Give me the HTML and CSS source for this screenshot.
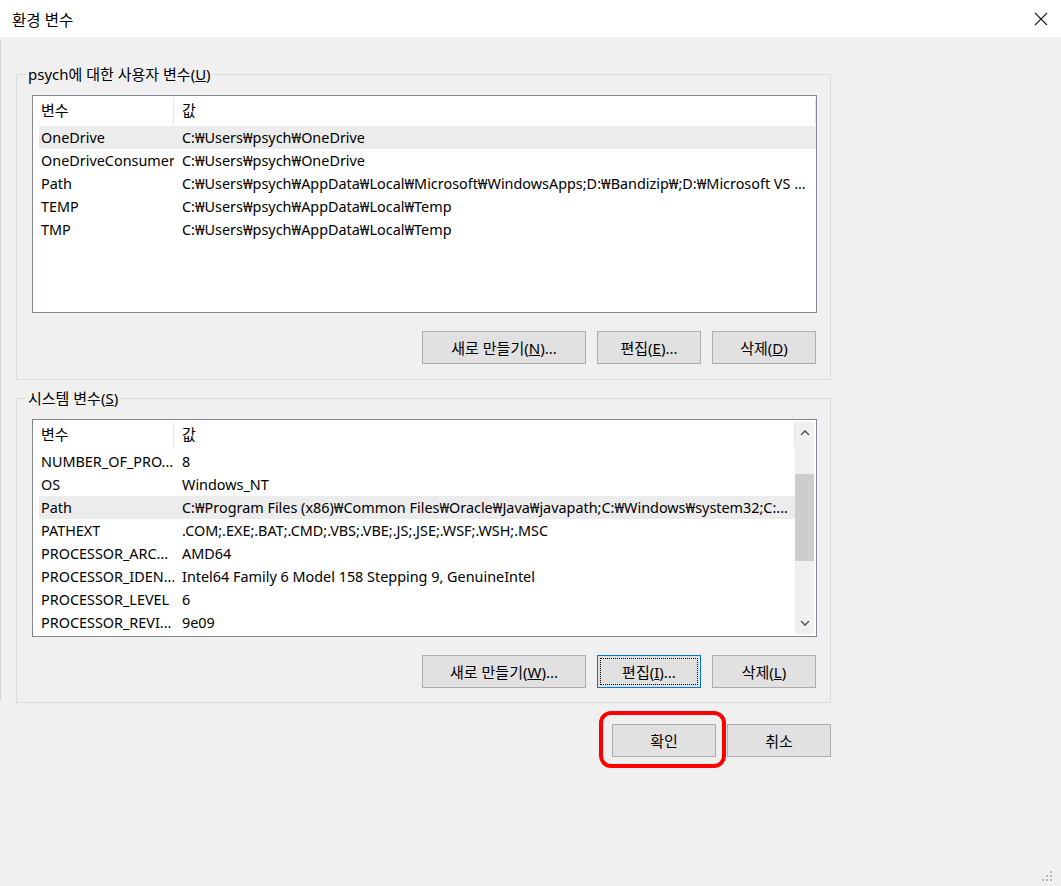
FILE: index.html
```html
<!DOCTYPE html>
<html lang="ko">
<head>
	<meta charset="UTF-8">
	<title>환경 변수</title>
	<link rel="stylesheet" href="styles.css">
</head>
<body>
	<div class="window">
		<div class="titlebar">
			<span class="title">환경 변수</span>
			<svg class="close" width="14" height="14" viewBox="0 0 14 14">
				<path d="M1 1 L13 13 M13 1 L1 13" stroke="#1e1e1e" stroke-width="1.1" fill="none"/>
			</svg>
		</div>
		<div class="content">
			<fieldset class="group">
				<legend>psych에 대한 사용자 변수(<u>U</u>)</legend>
				<div class="list">
					<div class="rows">
						<div class="row head"><span class="name">변수</span><span class="value">값</span></div>
						<div class="row sel"><span class="name">OneDrive</span><span class="value">C:₩Users₩psych₩OneDrive</span></div>
						<div class="row"><span class="name">OneDriveConsumer</span><span class="value">C:₩Users₩psych₩OneDrive</span></div>
						<div class="row"><span class="name">Path</span><span class="value">C:₩Users₩psych₩AppData₩Local₩Microsoft₩WindowsApps;D:₩Bandizip₩;D:₩Microsoft VS ...</span></div>
						<div class="row"><span class="name">TEMP</span><span class="value">C:₩Users₩psych₩AppData₩Local₩Temp</span></div>
						<div class="row"><span class="name">TMP</span><span class="value">C:₩Users₩psych₩AppData₩Local₩Temp</span></div>
					</div>
				</div>
				<div class="btnrow">
					<button class="btn wide">새로 만들기(<u>N</u>)...</button>
					<button class="btn">편집(<u>E</u>)...</button>
					<button class="btn">삭제(<u>D</u>)</button>
				</div>
			</fieldset>

			<fieldset class="group second">
				<legend>시스템 변수(<u>S</u>)</legend>
				<div class="list">
					<div class="rows">
						<div class="row head"><span class="name">변수</span><span class="value">값</span></div>
						<div class="row"><span class="name">NUMBER_OF_PRO...</span><span class="value">8</span></div>
						<div class="row"><span class="name">OS</span><span class="value">Windows_NT</span></div>
						<div class="row sel"><span class="name">Path</span><span class="value">C:₩Program Files (x86)₩Common Files₩Oracle₩Java₩javapath;C:₩Windows₩system32;C:...</span></div>
						<div class="row"><span class="name">PATHEXT</span><span class="value">.COM;.EXE;.BAT;.CMD;.VBS;.VBE;.JS;.JSE;.WSF;.WSH;.MSC</span></div>
						<div class="row"><span class="name">PROCESSOR_ARC...</span><span class="value">AMD64</span></div>
						<div class="row"><span class="name">PROCESSOR_IDEN...</span><span class="value">Intel64 Family 6 Model 158 Stepping 9, GenuineIntel</span></div>
						<div class="row"><span class="name">PROCESSOR_LEVEL</span><span class="value">6</span></div>
						<div class="row"><span class="name">PROCESSOR_REVI...</span><span class="value">9e09</span></div>
					</div>
					<div class="scrollbar">
						<svg class="arrow" width="10" height="8" viewBox="0 0 10 8"><path d="M1 6 L5 2 L9 6" stroke="#606060" stroke-width="1.6" fill="none"/></svg>
						<div class="track"><div class="thumb"></div></div>
						<svg class="arrow" width="10" height="8" viewBox="0 0 10 8"><path d="M1 2 L5 6 L9 2" stroke="#606060" stroke-width="1.6" fill="none"/></svg>
					</div>
				</div>
				<div class="btnrow">
					<button class="btn wide">새로 만들기(<u>W</u>)...</button>
					<button class="btn focus">편집(<u>I</u>)...</button>
					<button class="btn">삭제(<u>L</u>)</button>
				</div>
			</fieldset>

			<div class="dialog-btns">
				<span class="mark"><button class="btn">확인</button></span>
				<button class="btn">취소</button>
			</div>
		</div>
		<div class="edge"></div>
		<svg class="grip" width="12" height="12" viewBox="0 0 12 12">
			<rect x="8" y="0" width="2" height="2" fill="#b8b8b8"/>
			<rect x="8" y="4" width="2" height="2" fill="#b8b8b8"/>
			<rect x="4" y="4" width="2" height="2" fill="#b8b8b8"/>
			<rect x="8" y="8" width="2" height="2" fill="#b8b8b8"/>
			<rect x="4" y="8" width="2" height="2" fill="#b8b8b8"/>
			<rect x="0" y="8" width="2" height="2" fill="#b8b8b8"/>
		</svg>
	</div>
</body>
</html>
```

FILE: styles.css
```css
*{
	margin: 0;
	padding: 0;
	box-sizing: border-box;
}
body{
	font-family: "Noto Sans", "Noto Sans CJK KR", sans-serif;
	font-size: 14.4px;
	color: #000;
	background-color: #f0f0f0;
}
.window{
	position: relative;
	width: 1061px;
	height: 886px;
	background-color: #f0f0f0;
	overflow: hidden;
}
.titlebar{
	height: 37px;
	background-color: #fff;
	display: flex;
	align-items: center;
	justify-content: space-between;
	padding: 0 13px 0 12px;
}
.titlebar .title{
	font-family: "Noto Sans CJK KR", sans-serif;
	font-size: 15.5px;
}
.content{
	padding-left: 16px;
	width: 831px;
}
.group{
	margin-top: 27px;
	border: 1px solid #dcdcdc;
	padding: 11px 13px 15px 15px;
	min-width: 0;
}
.group.second{
	margin-top: 8px;
	padding-bottom: 14px;
}
.group legend{
	margin-left: -6px;
	padding: 0 2px;
	font-size: 15px;
	line-height: 20px;
}
.list{
	display: flex;
	height: 218px;
	border: 1px solid #828790;
	background-color: #fff;
}
.rows{
	flex: 1;
	min-width: 0;
}
.row{
	display: flex;
	height: 23px;
	line-height: 23px;
	white-space: nowrap;
}
.row span{
	overflow: hidden;
}
.row .name{
	width: 141px;
	flex-shrink: 0;
	padding-left: 8px;
}
.row .value{
	flex: 1;
	padding-left: 8px;
}
.row.head{
	height: 30px;
	font-size: 15px;
}
.row.head .name,
.row.head .value{
	border-right: 1px solid #e5e5e5;
	margin: 2px 0 3px;
	line-height: 25px;
}
.row.sel{
	margin-left: 6px;
	background-color: #ececec;
}
.row.sel .name{
	width: 135px;
	padding-left: 2px;
}
.scrollbar{
	width: 19px;
	margin: 2px 2px 2px 0;
	background-color: #f0f0f0;
	display: flex;
	flex-direction: column;
	align-items: center;
}
.scrollbar .arrow{
	margin: 7px 0;
}
.scrollbar .track{
	flex: 1;
	width: 100%;
}
.scrollbar .thumb{
	margin-top: 30px;
	height: 87px;
	background-color: #cdcdcd;
}
.btnrow{
	display: flex;
	justify-content: flex-end;
	gap: 11px;
	margin-top: 18px;
	padding-right: 1px;
}
.btn{
	width: 104px;
	height: 33px;
	font-family: "Noto Sans", "Noto Sans CJK KR", sans-serif;
	font-size: 15px;
	color: #000;
	background-color: #e1e1e1;
	border: 1px solid #adadad;
}
.btn.wide{
	width: 164px;
}
.btn.focus{
	border-color: #0078d7;
	outline: 1px dotted #000;
	outline-offset: -4px;
}
.dialog-btns{
	display: flex;
	justify-content: flex-end;
	gap: 11px;
	margin-top: 21px;
}
.mark{
	position: relative;
	display: flex;
}
.mark::after{
	content: "";
	position: absolute;
	top: -13px;
	left: -13px;
	right: -10px;
	bottom: -11px;
	border: 4.5px solid #ff0000;
	border-radius: 12px;
}
.edge{
	position: absolute;
	left: 0;
	top: 40px;
	width: 1px;
	height: 660px;
	background-color: #d4d4d4;
}
.grip{
	position: absolute;
	right: 7px;
	bottom: 3px;
}
```
